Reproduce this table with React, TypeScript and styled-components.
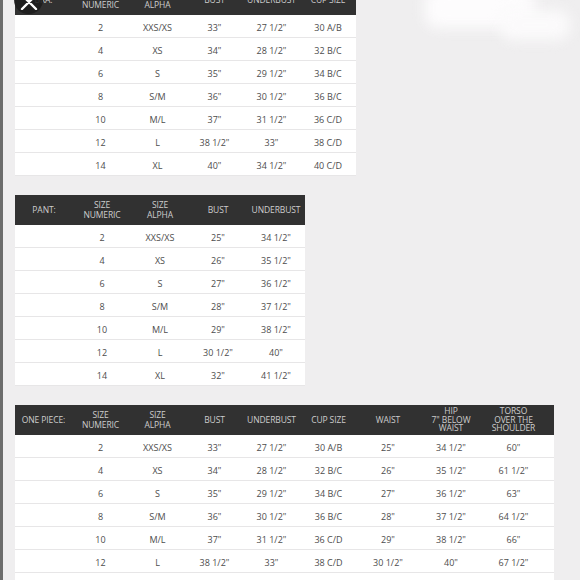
import styled, { createGlobalStyle } from 'styled-components'

interface Column {
  label: string[]
  width: number
}

interface Props {
  columns: Column[]
  rows: string[][]
  trailing?: number
}

const sizes = ['2', '4', '6', '8', '10', '12', '14']
const alpha = ['XXS/XS', 'XS', 'S', 'S/M', 'M/L', 'L', 'XL']

const bra = {
  columns: [
    { label: ['BRA:'], width: 57 },
    { label: ['SIZE', 'NUMERIC'], width: 57 },
    { label: ['SIZE', 'ALPHA'], width: 57 },
    { label: ['BUST'], width: 57 },
    { label: ['UNDERBUST'], width: 57 },
    { label: ['CUP SIZE'], width: 56 },
  ],
  rows: [
    ['33"', '27 1/2"', '30 A/B'],
    ['34"', '28 1/2"', '32 B/C'],
    ['35"', '29 1/2"', '34 B/C'],
    ['36"', '30 1/2"', '36 B/C'],
    ['37"', '31 1/2"', '36 C/D'],
    ['38 1/2"', '33"', '38 C/D'],
    ['40"', '34 1/2"', '40 C/D'],
  ],
}

const pant = {
  columns: [
    { label: ['PANT:'], width: 58 },
    { label: ['SIZE', 'NUMERIC'], width: 58 },
    { label: ['SIZE', 'ALPHA'], width: 58 },
    { label: ['BUST'], width: 58 },
    { label: ['UNDERBUST'], width: 58 },
  ],
  rows: [
    ['25"', '34 1/2"'],
    ['26"', '35 1/2"'],
    ['27"', '36 1/2"'],
    ['28"', '37 1/2"'],
    ['29"', '38 1/2"'],
    ['30 1/2"', '40"'],
    ['32"', '41 1/2"'],
  ],
}

const onePiece = {
  columns: [
    { label: ['ONE PIECE:'], width: 57 },
    { label: ['SIZE', 'NUMERIC'], width: 57 },
    { label: ['SIZE', 'ALPHA'], width: 57 },
    { label: ['BUST'], width: 57 },
    { label: ['UNDERBUST'], width: 57 },
    { label: ['CUP SIZE'], width: 57 },
    { label: ['WAIST'], width: 62 },
    { label: ['HIP', '7" BELOW', 'WAIST'], width: 64 },
    { label: ['TORSO', 'OVER THE', 'SHOULDER'], width: 71 },
  ],
  rows: [
    ['33"', '27 1/2"', '30 A/B', '25"', '34 1/2"', '60"'],
    ['34"', '28 1/2"', '32 B/C', '26"', '35 1/2"', '61 1/2"'],
    ['35"', '29 1/2"', '34 B/C', '27"', '36 1/2"', '63"'],
    ['36"', '30 1/2"', '36 B/C', '28"', '37 1/2"', '64 1/2"'],
    ['37"', '31 1/2"', '36 C/D', '29"', '38 1/2"', '66"'],
    ['38 1/2"', '33"', '38 C/D', '30 1/2"', '40"', '67 1/2"'],
    ['40"', '34 1/2"', '40 C/D', '31 1/2"', '41 1/2"', '69"'],
  ],
}

const withSizes = (rows: string[][]) => rows.map((r, i) => ['', sizes[i], alpha[i], ...r])

const SizeTable: React.FC<Props> = ({ columns, rows, trailing }) => {
  const total = columns.reduce((s, c) => s + c.width, 0)
  return (
    <Table style={{ width: total }}>
      <colgroup>
        {columns.map((c, i) => <col key={i} style={{ width: c.width }} />)}
      </colgroup>
      <thead>
        <tr>
          {columns.map((c, i) => (
            <HeadCell key={i} $tight={c.label.length > 2} $trailing={i === columns.length - 1 ? trailing : 0}>
              {c.label.map((l, j) => <div key={j}>{l}</div>)}
            </HeadCell>
          ))}
        </tr>
      </thead>
      <tbody>
        {withSizes(rows).map((r, i) => (
          <tr key={i}>
            {r.map((v, j) => (
              <Cell key={j} $trailing={j === r.length - 1 ? trailing : 0}>{v}</Cell>
            ))}
          </tr>
        ))}
      </tbody>
    </Table>
  )
}

const App = () => {
  return (
    <>
      <GlobalStyle />
      <Page>
        <SizeTable {...bra} />
        <SizeTable {...pant} />
        <SizeTable {...onePiece} trailing={10} />
      </Page>
      <CloseButton>
        <svg width="18" height="16" viewBox="0 0 18 16">
          <path d="M2 1 L16 15 M16 1 L2 15" stroke="#fff" strokeWidth="2.4" strokeLinecap="round" />
        </svg>
      </CloseButton>
      <Glare />
      <GlareTail />
    </>
  )
}

export default App

const GlobalStyle = createGlobalStyle`
  html, body {
    margin: 0;
    background: #efeeef;
    overflow: hidden;
    height: 100%;
  }
  body {
    font-family: "Open Sans", "Liberation Sans", sans-serif;
  }
`
const Page = styled.main`
  height: 600px;
  box-sizing: border-box;
  border-left: 3px solid #6c6c6c;
  padding-left: 12px;
  margin-top: -15px;
  display: flex;
  flex-direction: column;
  align-items: flex-start;
  gap: 19px;
`
const Table = styled.table`
  border-collapse: collapse;
  table-layout: fixed;
  flex-shrink: 0;
`
const HeadCell = styled.th<{ $tight: boolean; $trailing?: number }>`
  height: 30px;
  padding: 0 ${(p) => p.$trailing ?? 0}px 0 0;
  background: #313131;
  color: #cdcdcd;
  font-size: 8.5px;
  font-weight: 400;
  line-height: ${(p) => (p.$tight ? '8.4px' : '10.5px')};
  text-align: center;
  letter-spacing: -0.1px;
`
const Cell = styled.td<{ $trailing?: number }>`
  height: 20px;
  padding: 2px ${(p) => p.$trailing ?? 0}px 0 0;
  background: #fff;
  border-bottom: 1px solid #e7e6e7;
  color: #4d4d4d;
  font-size: 9px;
  text-align: center;
`
const CloseButton = styled.div`
  position: absolute;
  left: 14px;
  top: -14px;
  width: 29px;
  height: 28px;
  border-radius: 50%;
  background: rgba(28, 28, 28, 0.88);
  display: flex;
  align-items: flex-end;
  justify-content: center;
  padding-bottom: 4px;
  box-sizing: border-box;
`
const Glare = styled.div`
  position: absolute;
  left: 425px;
  top: -12px;
  width: 110px;
  height: 40px;
  border-radius: 12px;
  background: #fdfcfd;
  filter: blur(7px);
`
const GlareTail = styled.div`
  position: absolute;
  left: 500px;
  top: 10px;
  width: 70px;
  height: 30px;
  border-radius: 12px;
  background: #fbfafb;
  filter: blur(7px);
`
